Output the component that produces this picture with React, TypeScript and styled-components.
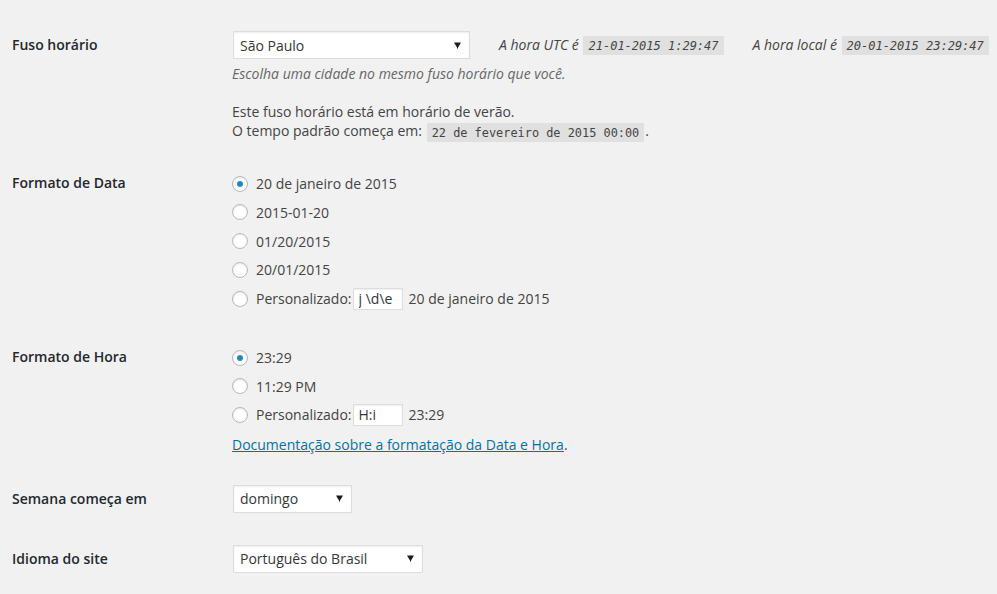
// ______________________________________________________
// Configurações gerais: data e hora
import React from "react"
import styled, { createGlobalStyle } from "styled-components"

const GlobalStyle = createGlobalStyle`
  body {
    margin: 0;
    background: #f1f1f1;
    font-family: "Open Sans", "Noto Sans", sans-serif;
    font-size: 14px;
    color: #444;
  }
`

const dateFormats = [
  "20 de janeiro de 2015",
  "2015-01-20",
  "01/20/2015",
  "20/01/2015",
]
const timeFormats = ["23:29", "11:29 PM"]

// ______________________________________________________
// partes
const Page = styled.div`
  padding: 0 0 0 12px;
`

const Row = styled.div<{ $top: number }>`
  display: flex;
  align-items: flex-start;
  padding-top: ${p => p.$top}px;
`

const Label = styled.div<{ $lh: number }>`
  flex: none;
  width: 220px;
  font-weight: 600;
  color: #23282d;
  line-height: ${p => p.$lh}px;
`

const Field = styled.div`
  display: flex;
  flex-direction: column;
  align-items: flex-start;
`

const Inline = styled.div`
  display: flex;
  align-items: center;
  height: 28px;
`

const SelectBox = styled.div<{ $width: number }>`
  display: flex;
  align-items: center;
  justify-content: space-between;
  box-sizing: border-box;
  width: ${p => p.$width}px;
  height: 28px;
  margin-left: 1px;
  padding: 0 8px 0 6px;
  background: #fff;
  border: 1px solid #ddd;
  box-shadow: inset 0 1px 2px rgba(0, 0, 0, 0.07);
  color: #32373c;
`

const TimeInfo = styled.span<{ $gap: number }>`
  margin-left: ${p => p.$gap}px;
  font-style: italic;
  white-space: nowrap;
`

const Code = styled.code<{ $italic?: boolean }>`
  display: inline-block;
  margin: 0 1px;
  padding: 3px 5px 2px;
  background: rgba(0, 0, 0, 0.07);
  font-family: "DejaVu Sans Mono", "Liberation Mono", monospace;
  font-size: ${p => (p.$italic ? 12 : 11.9)}px;
  line-height: 14px;
  font-style: ${p => (p.$italic ? "italic" : "normal")};
  color: #444;
  vertical-align: middle;
`

const Description = styled.p`
  margin: 5px 0 0;
  line-height: 20px;
  font-style: italic;
  color: #666;
`

const Notice = styled.p`
  margin: 18px 0 0;
  line-height: 19px;
`

const Option = styled.label<{ $h: number }>`
  display: flex;
  align-items: center;
  height: ${p => p.$h}px;
  white-space: nowrap;
`

const Radio = styled.span<{ $checked?: boolean }>`
  display: flex;
  align-items: center;
  justify-content: center;
  box-sizing: border-box;
  width: 16px;
  height: 16px;
  margin-right: 8px;
  border: 1px solid #b4b9be;
  border-radius: 50%;
  background: #fff;
  box-shadow: inset 0 1px 2px rgba(0, 0, 0, 0.1);
  &::after {
    content: "";
    display: ${p => (p.$checked ? "block" : "none")};
    width: 6px;
    height: 6px;
    border-radius: 50%;
    background: #1e8cbe;
  }
`

const SmallInput = styled.input`
  box-sizing: border-box;
  width: 50px;
  height: 22px;
  margin: 0 6px 0 1px;
  padding: 0 5px;
  border: 1px solid #ddd;
  background: #fff;
  box-shadow: inset 0 1px 2px rgba(0, 0, 0, 0.07);
  font-family: "Open Sans", sans-serif;
  font-size: 14px;
  color: #32373c;
  outline: none;
`

const DocLine = styled.p`
  margin: 6px 0 0;
  line-height: 20px;
`

const DocLink = styled.a`
  color: #0073aa;
  text-decoration: underline;
`

// ______________________________________________________
//
const Arrow = () => (
  <svg width="7" height="7" viewBox="0 0 7 7">
    <path d="M0 0.5 H7 L4 5.5 V6.5 H3 V5.5 Z" fill="#1b1b1b" />
  </svg>
)

const Select: React.FC<{ width: number; value: string }> = ({ width, value }) => (
  <SelectBox $width={width}>
    <span>{value}</span>
    <Arrow />
  </SelectBox>
)

const App: React.FC = () => (
  <Page>
    <GlobalStyle />

    <Row $top={31}>
      <Label $lh={28}>Fuso horário</Label>
      <Field>
        <Inline>
          <Select width={237} value="São Paulo" />
          <TimeInfo $gap={29}>
            A hora UTC é <Code $italic>21-01-2015 1:29:47</Code>
          </TimeInfo>
          <TimeInfo $gap={28}>
            A hora local é <Code $italic>20-01-2015 23:29:47</Code>
          </TimeInfo>
        </Inline>
        <Description>Escolha uma cidade no mesmo fuso horário que você.</Description>
        <Notice>
          Este fuso horário está em horário de verão.
          <br />
          O tempo padrão começa em: <Code>22 de fevereiro de 2015 00:00</Code>.
        </Notice>
      </Field>
    </Row>

    <Row $top={27.4}>
      <Label $lh={28.75}>Formato de Data</Label>
      <Field>
        {dateFormats.map((f, i) => (
          <Option key={f} $h={28.75}>
            <Radio $checked={i === 0} />
            {f}
          </Option>
        ))}
        <Option $h={28.75}>
          <Radio />
          Personalizado:
          <SmallInput readOnly value="j \d\e" />
          20 de janeiro de 2015
        </Option>
      </Field>
    </Row>

    <Row $top={30.4}>
      <Label $lh={28.5}>Formato de Hora</Label>
      <Field>
        {timeFormats.map((f, i) => (
          <Option key={f} $h={28.5}>
            <Radio $checked={i === 0} />
            {f}
          </Option>
        ))}
        <Option $h={28.5}>
          <Radio />
          Personalizado:
          <SmallInput readOnly value="H:i" />
          23:29
        </Option>
        <DocLine>
          <DocLink href="#">Documentação sobre a formatação da Data e Hora</DocLink>.
        </DocLine>
      </Field>
    </Row>

    <Row $top={30}>
      <Label $lh={28}>Semana começa em</Label>
      <Field>
        <Select width={119} value="domingo" />
      </Field>
    </Row>

    <Row $top={32}>
      <Label $lh={28}>Idioma do site</Label>
      <Field>
        <Select width={190} value="Português do Brasil" />
      </Field>
    </Row>
  </Page>
)

export default App
